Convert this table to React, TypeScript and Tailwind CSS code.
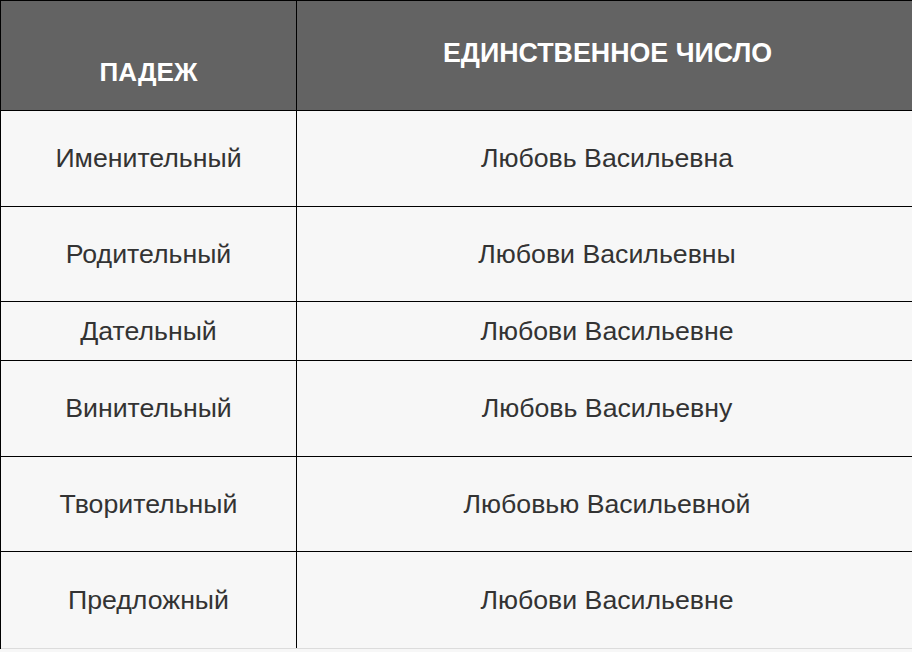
import React from "react";

const rows: { c: string; s: string; h: string }[] = [
  { c: "Именительный", s: "Любовь Васильевна", h: "h-[96px]" },
  { c: "Родительный", s: "Любови Васильевны", h: "h-[95px]" },
  { c: "Дательный", s: "Любови Васильевне", h: "h-[59px]" },
  { c: "Винительный", s: "Любовь Васильевну", h: "h-[96px]" },
  { c: "Творительный", s: "Любовью Васильевной", h: "h-[95px]" },
  { c: "Предложный", s: "Любови Васильевне", h: "h-[97px]" },
];

export default function App() {
  return (
    <div
      className="w-[912px] h-[652px] overflow-hidden bg-[#f7f7f7]"
      style={{ fontFamily: '"Liberation Sans", Arial, sans-serif' }}
    >
      <div className="border-t border-l border-black">
        <div className="flex h-[110px] bg-[#636363] border-b border-black text-white font-bold">
          <div className="w-[296px] shrink-0 border-r border-black flex items-center justify-center pt-[34px] text-[26px]">
            ПАДЕЖ
          </div>
          <div className="flex-1 flex items-center justify-center pb-[4px] pl-[6px] text-[26.8px]">
            ЕДИНСТВЕННОЕ ЧИСЛО
          </div>
        </div>
        {rows.map((r, i) => (
          <div
            key={i}
            className={`flex ${r.h} ${i < rows.length - 1 ? "border-b border-black" : "border-b border-[#dcdcdc]"} text-[#333333] text-[26.7px]`}
          >
            <div className="w-[296px] shrink-0 border-r border-black flex items-center justify-center">
              {r.c}
            </div>
            <div className="flex-1 flex items-center justify-center pl-[5px]">{r.s}</div>
          </div>
        ))}
      </div>
    </div>
  );
}
